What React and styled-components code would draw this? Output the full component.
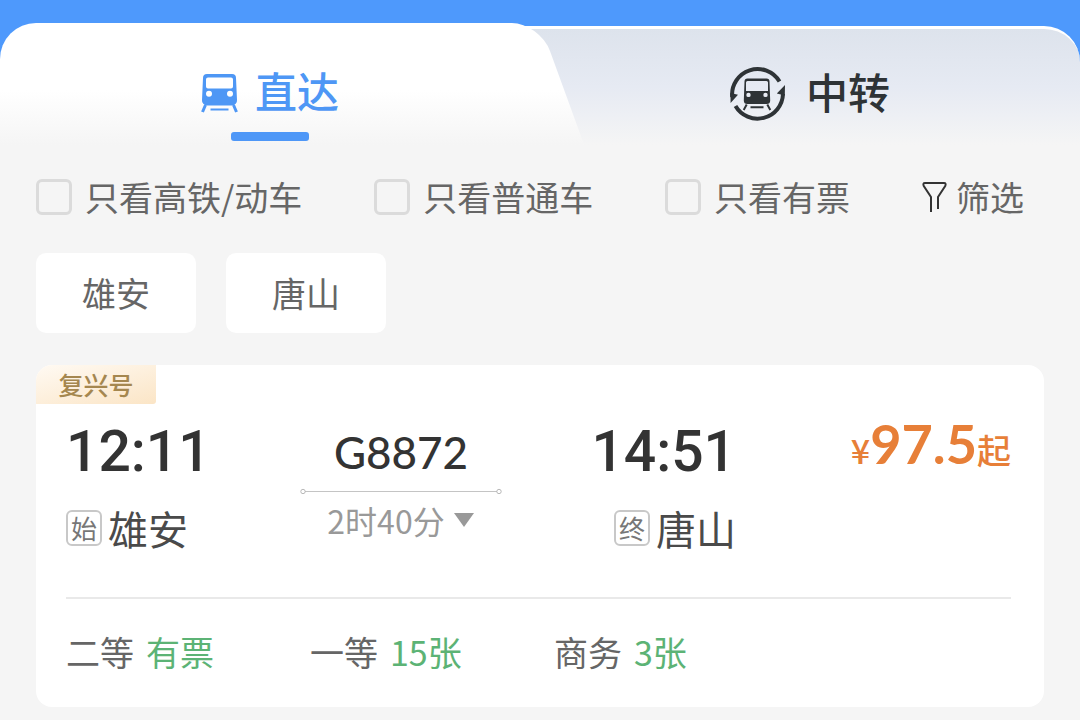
import { useState } from "react";
import styled, { createGlobalStyle } from "styled-components";

const GlobalStyle = createGlobalStyle`
  * {
    box-sizing: border-box;
  }
  body {
    margin: 0;
    background-color: #f5f5f5;
    color: #333;
    font-family: "Noto Sans CJK SC", sans-serif;
  }
  button {
    border: none;
    padding: 0;
    background: none;
    color: inherit;
    font-family: inherit;
    cursor: pointer;
  }
`;

const TabBar = styled.nav`
  display: grid;
  grid-template-columns: 1fr 1fr;
  padding-top: 23px;
  background: linear-gradient(#4e99fc 80px, #f5f5f5 80px);
  overflow: hidden;
`;
const Tab = styled.button`
  position: relative;
  z-index: 1;
  display: flex;
  flex-direction: column;
  align-items: center;
  gap: 12px;
  height: 122px;
  padding-top: 37px;
  font-size: 42px;
  line-height: 60px;
  font-weight: 500;
`;
const DirectTab = styled(Tab)`
  z-index: 2;
  color: #4e97f5;
  border-radius: 36px 36px 0 0;
  background: linear-gradient(#fff 55%, #f5f5f5);

  /* slanted right edge */
  &::before {
    content: "";
    position: absolute;
    z-index: -1;
    inset: 0 -22px 0 50%;
    border-top-right-radius: 28px;
    background: linear-gradient(#fff 55%, #f5f5f5);
    transform: skewX(20deg);
  }
  &::after {
    content: "";
    width: 78px;
    height: 9px;
    border-radius: 3px;
    background-color: #4e97f7;
  }
`;
const TransferTab = styled(Tab)`
  color: #2e3336;

  &::before {
    content: "";
    position: absolute;
    z-index: -1;
    inset: 3px 0 0 -60px;
    border-top: 3px solid #fff;
    border-top-right-radius: 36px;
    background: linear-gradient(#dde3ec, #e6eaf3 50%, #f5f5f5);
  }
`;
const TabLabel = styled.span`
  display: flex;
  align-items: center;
  gap: ${({ $gap }) => $gap}px;

  svg {
    margin-top: 6px;
  }
`;

const Main = styled.main`
  display: flex;
  flex-direction: column;
  gap: 32px;
  padding: 28px 36px 13px;
`;
const Filters = styled.div`
  display: flex;
  justify-content: space-between;
  padding-right: 20px;
  color: #666;
  font-size: 34px;
  line-height: 48px;
`;
const CheckLabel = styled.label`
  display: flex;
  align-items: center;
  gap: 13px;
`;
const Checkbox = styled.input`
  appearance: none;
  width: 36px;
  height: 36px;
  margin: 0;
  border: 3px solid #dbdbdb;
  border-radius: 6px;

  &:checked {
    border-color: #4e97f7;
    background-color: #4e97f7;
  }
`;
const FilterButton = styled.button`
  display: flex;
  align-items: center;
  gap: 9px;
  font-size: 34px;
  line-height: 48px;
`;
const Chips = styled.div`
  display: flex;
  gap: 30px;
`;
const Chip = styled.button`
  width: 160px;
  height: 80px;
  padding-bottom: 2px;
  border-radius: 10px;
  background-color: #fff;
  color: #666;
  font-size: 34px;
`;

const Card = styled.article`
  border-radius: 16px;
  background-color: #fff;
  overflow: hidden;
`;
const Badge = styled.div`
  width: 120px;
  height: 39px;
  border-bottom-right-radius: 3px;
  background: linear-gradient(165deg, #fffaf3, #fbe5c6);
  color: #a5874f;
  font-size: 25px;
  font-weight: 500;
  line-height: 38px;
  text-align: center;
`;
const Trip = styled.div`
  display: grid;
  grid-template-columns: 146px 202px 146px 1fr;
  column-gap: 88px;
  align-items: start;
  margin: 0 33px 0 30px;
  padding: 16px 0 45px;
  border-bottom: 2px solid #e9e9e9;
`;
const Stop = styled.div`
  display: flex;
  flex-direction: column;
  align-items: ${({ $align }) => $align};
  gap: 20px;
`;
const Time = styled.time`
  font-family: Roboto, sans-serif;
  font-size: 57px;
  font-weight: 500;
  line-height: 64px;
`;
const Station = styled.div`
  display: flex;
  align-items: center;
  gap: 6px;
  color: #4a4a4a;
  font-size: 40px;
  line-height: 48px;
`;
const StationTag = styled.span`
  width: 36px;
  height: 36px;
  border: 2px solid #c8c8c8;
  border-radius: 6px;
  color: #777;
  font-size: 26px;
  line-height: 32px;
  text-align: center;
`;
const Middle = styled.div`
  display: flex;
  flex-direction: column;
  align-items: center;
`;
const TrainNo = styled.div`
  margin-bottom: 4px;
  font-family: Lato, sans-serif;
  font-size: 44px;
  font-weight: 500;
  line-height: 64px;
`;
const Duration = styled.button`
  display: flex;
  align-items: center;
  gap: 8px;
  color: #999;
  font-size: 32px;
  line-height: 52px;
`;
const Price = styled.div`
  color: #e77f38;
  font-size: 34px;
  font-weight: 500;
  line-height: 48px;
  text-align: right;
  white-space: nowrap;
`;
const Amount = styled.span`
  font-family: Lato, sans-serif;
  font-size: 54px;
  font-weight: 700;
`;
const Seats = styled.div`
  display: grid;
  grid-template-columns: repeat(3, 244px);
  padding: 29px 30px 31px;
`;
const Seat = styled.div`
  display: flex;
  gap: 12px;
  color: #666;
  font-size: 34px;
  line-height: 48px;
`;
const Left = styled.span`
  color: #5cb375;
`;

function TrainIcon() {
  return (
    <svg width="37" height="40" viewBox="0 0 37 40" aria-hidden="true">
      <path
        fill="currentColor"
        fillRule="evenodd"
        d="M6 1h25a4 4 0 0 1 4 4l1 22a5 5 0 0 1-5 5.500h-25a5 5 0 0 1-5-5.500l1-22a4 4 0 0 1 4-4ZM7 4.500a2 2 0 0 0-2 2v7a2 2 0 0 0 2 2h23a2 2 0 0 0 2-2v-7a2 2 0 0 0-2-2ZM8 17.700a3 3 0 1 0 0 6a3 3 0 1 0 0-6ZM29 17.700a3 3 0 1 0 0 6a3 3 0 1 0 0-6Z"
      />
      <path
        d="M4.500 32 1.500 39M32.500 32l3 7"
        stroke="currentColor"
        strokeWidth="3"
      />
      <path d="M9.500 36.500h18" stroke="currentColor" strokeWidth="2" />
    </svg>
  );
}

function TransferIcon() {
  return (
    <svg width="56" height="56" viewBox="0 0 56 56" fill="none" aria-hidden="true">
      <path
        d="M2.200 31A25.500 25.500 0 0 1 49.500 15.500M53 28A25.500 25.500 0 0 1 5.500 40"
        stroke="currentColor"
        strokeWidth="4"
      />
      <path
        fill="currentColor"
        d="M.5 27 8 28.700.6 37ZM55 19l-8.200 8.500 8 2Z"
      />
      <path
        fill="currentColor"
        fillRule="evenodd"
        d="M17.500 12.500h19a3 3 0 0 1 3 3l.7 19a3.500 3.500 0 0 1-3.500 3.500h-19.400a3.500 3.500 0 0 1-3.500-3.500l.7-19a3 3 0 0 1 3-3ZM17.500 15a1.500 1.500 0 0 0-1.500 1.500V25h22v-8.500a1.500 1.500 0 0 0-1.500-1.500ZM18.500 26.700a2.200 2.200 0 1 0 0 4.400a2.200 2.200 0 1 0 0-4.400ZM35.500 26.700a2.200 2.200 0 1 0 0 4.400a2.200 2.200 0 1 0 0-4.400Z"
      />
      <path
        d="m16.700 38.500-3 5.500M37.300 38.500l3 5.500M20.500 41.300h13"
        stroke="currentColor"
        strokeWidth="2"
      />
    </svg>
  );
}

function FunnelIcon() {
  return (
    <svg width="25" height="32" viewBox="0 0 25 32" fill="none" aria-hidden="true">
      <path
        d="M9 31V16L1.800 5Q.5 2 3 2h19q2.500 0 1.200 3L16 16v12"
        stroke="#333"
        strokeWidth="2"
      />
    </svg>
  );
}

function RouteLine() {
  return (
    <svg width="202" height="6" viewBox="0 0 202 6" fill="none" aria-hidden="true">
      <path d="M5 3.500h192" stroke="#c4c4c4" />
      <circle cx="3" cy="3.500" r="2.200" stroke="#b8b8b8" />
      <circle cx="199" cy="3.500" r="2.200" stroke="#b8b8b8" />
    </svg>
  );
}

const filters = ["只看高铁/动车", "只看普通车", "只看有票"];
const stations = ["雄安", "唐山"];
const seats = [
  { name: "二等", left: "有票" },
  { name: "一等", left: "15张" },
  { name: "商务", left: "3张" },
];

function App() {
  const [checked, setChecked] = useState({});

  return (
    <>
      <GlobalStyle />
      <TabBar>
        <DirectTab type="button">
          <TabLabel $gap={17}>
            <TrainIcon />
            直达
          </TabLabel>
        </DirectTab>
        <TransferTab type="button">
          <TabLabel $gap={20}>
            <TransferIcon />
            中转
          </TabLabel>
        </TransferTab>
      </TabBar>
      <Main>
        <Filters>
          {filters.map((name) => (
            <CheckLabel key={name}>
              <Checkbox
                type="checkbox"
                checked={!!checked[name]}
                onChange={(e) =>
                  setChecked({ ...checked, [name]: e.target.checked })
                }
              />
              {name}
            </CheckLabel>
          ))}
          <FilterButton type="button">
            <FunnelIcon />
            筛选
          </FilterButton>
        </Filters>
        <Chips>
          {stations.map((name) => (
            <Chip key={name} type="button">
              {name}
            </Chip>
          ))}
        </Chips>
        <Card>
          <Badge>复兴号</Badge>
          <Trip>
            <Stop $align="flex-start">
              <Time>12:11</Time>
              <Station>
                <StationTag>始</StationTag>
                雄安
              </Station>
            </Stop>
            <Middle>
              <TrainNo>G8872</TrainNo>
              <RouteLine />
              <Duration type="button">
                2时40分
                <svg width="22" height="16" viewBox="0 0 22 16" aria-hidden="true">
                  <path d="M1 1h20L11 15Z" fill="#999" />
                </svg>
              </Duration>
            </Middle>
            <Stop $align="flex-end">
              <Time>14:51</Time>
              <Station>
                <StationTag>终</StationTag>
                唐山
              </Station>
            </Stop>
            <Price>
              ¥<Amount>97.5</Amount>起
            </Price>
          </Trip>
          <Seats>
            {seats.map((seat) => (
              <Seat key={seat.name}>
                {seat.name}
                <Left>{seat.left}</Left>
              </Seat>
            ))}
          </Seats>
        </Card>
      </Main>
    </>
  );
}

export default App;
